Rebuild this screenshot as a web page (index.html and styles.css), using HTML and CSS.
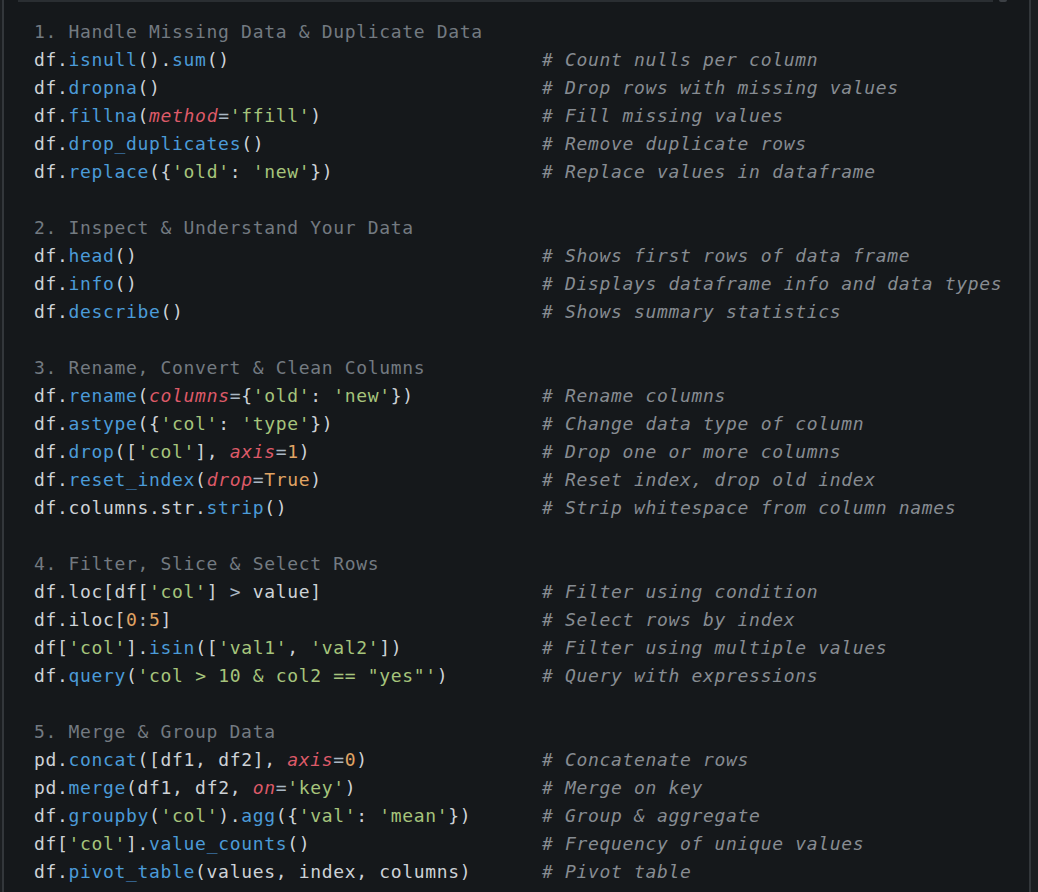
FILE: index.html
```html
<!DOCTYPE html>
<html lang="en">
<head>
<meta charset="utf-8">
<title>Pandas cheat sheet</title>
<link rel="stylesheet" href="styles.css">
</head>
<body>
<div class="window">
  <div class="topbar"><span class="topbar-line"></span><span class="topbar-knob"></span></div>
  <div class="code-block">
    <section class="group">
      <div class="row head">1. Handle Missing Data &amp; Duplicate Data</div>
      <div class="row"><span class="code">df.<span class="fn">isnull</span>().<span class="fn">sum</span>()</span><span class="cmt"># Count nulls per column</span></div>
      <div class="row"><span class="code">df.<span class="fn">dropna</span>()</span><span class="cmt"># Drop rows with missing values</span></div>
      <div class="row"><span class="code">df.<span class="fn">fillna</span>(<span class="kw">method</span><span class="op">=</span><span class="str">'ffill'</span>)</span><span class="cmt"># Fill missing values</span></div>
      <div class="row"><span class="code">df.<span class="fn">drop_duplicates</span>()</span><span class="cmt"># Remove duplicate rows</span></div>
      <div class="row"><span class="code">df.<span class="fn">replace</span>({<span class="str">'old'</span>: <span class="str">'new'</span>})</span><span class="cmt"># Replace values in dataframe</span></div>
    </section>
    <section class="group">
      <div class="row head">2. Inspect &amp; Understand Your Data</div>
      <div class="row"><span class="code">df.<span class="fn">head</span>()</span><span class="cmt"># Shows first rows of data frame</span></div>
      <div class="row"><span class="code">df.<span class="fn">info</span>()</span><span class="cmt"># Displays dataframe info and data types</span></div>
      <div class="row"><span class="code">df.<span class="fn">describe</span>()</span><span class="cmt"># Shows summary statistics</span></div>
    </section>
    <section class="group">
      <div class="row head">3. Rename, Convert &amp; Clean Columns</div>
      <div class="row"><span class="code">df.<span class="fn">rename</span>(<span class="kw">columns</span><span class="op">=</span>{<span class="str">'old'</span>: <span class="str">'new'</span>})</span><span class="cmt"># Rename columns</span></div>
      <div class="row"><span class="code">df.<span class="fn">astype</span>({<span class="str">'col'</span>: <span class="str">'type'</span>})</span><span class="cmt"># Change data type of column</span></div>
      <div class="row"><span class="code">df.<span class="fn">drop</span>([<span class="str">'col'</span>], <span class="kw">axis</span><span class="op">=</span><span class="num">1</span>)</span><span class="cmt"># Drop one or more columns</span></div>
      <div class="row"><span class="code">df.<span class="fn">reset_index</span>(<span class="kw">drop</span><span class="op">=</span><span class="num">True</span>)</span><span class="cmt"># Reset index, drop old index</span></div>
      <div class="row"><span class="code">df.columns.str.<span class="fn">strip</span>()</span><span class="cmt"># Strip whitespace from column names</span></div>
    </section>
    <section class="group">
      <div class="row head">4. Filter, Slice &amp; Select Rows</div>
      <div class="row"><span class="code">df.loc[df[<span class="str">'col'</span>] <span class="op">&gt;</span> value]</span><span class="cmt"># Filter using condition</span></div>
      <div class="row"><span class="code">df.iloc[<span class="num">0</span><span class="op">:</span><span class="num">5</span>]</span><span class="cmt"># Select rows by index</span></div>
      <div class="row"><span class="code">df[<span class="str">'col'</span>].<span class="fn">isin</span>([<span class="str">'val1'</span>, <span class="str">'val2'</span>])</span><span class="cmt"># Filter using multiple values</span></div>
      <div class="row"><span class="code">df.<span class="fn">query</span>(<span class="str">'col &gt; 10 &amp; col2 == "yes"'</span>)</span><span class="cmt"># Query with expressions</span></div>
    </section>
    <section class="group">
      <div class="row head">5. Merge &amp; Group Data</div>
      <div class="row"><span class="code">pd.<span class="fn">concat</span>([df1, df2], <span class="kw">axis</span><span class="op">=</span><span class="num">0</span>)</span><span class="cmt"># Concatenate rows</span></div>
      <div class="row"><span class="code">pd.<span class="fn">merge</span>(df1, df2, <span class="kw">on</span><span class="op">=</span><span class="str">'key'</span>)</span><span class="cmt"># Merge on key</span></div>
      <div class="row"><span class="code">df.<span class="fn">groupby</span>(<span class="str">'col'</span>).<span class="fn">agg</span>({<span class="str">'val'</span>: <span class="str">'mean'</span>})</span><span class="cmt"># Group &amp; aggregate</span></div>
      <div class="row"><span class="code">df[<span class="str">'col'</span>].<span class="fn">value_counts</span>()</span><span class="cmt"># Frequency of unique values</span></div>
      <div class="row"><span class="code">df.<span class="fn">pivot_table</span>(values, index, columns)</span><span class="cmt"># Pivot table</span></div>
    </section>
  </div>
</div>
</body>
</html>
```

FILE: styles.css
```css
html, body {
  margin: 0;
  padding: 0;
  background: #1b1e21;
}

body {
  width: 1038px;
  height: 892px;
  overflow: hidden;
}

.window {
  margin-left: 2px;
  width: 1029px;
  height: 892px;
  background: #15181b;
  border-left: 2px solid #33373b;
  border-right: 2px solid #33373b;
  box-sizing: border-box;
  display: flex;
  flex-direction: column;
}

.topbar {
  height: 2px;
  display: flex;
  align-items: center;
  padding-left: 14px;
  padding-right: 22px;
  gap: 6px;
}

.topbar-line {
  flex: 1;
  height: 2px;
  background: #2a2e32;
}

.topbar-knob {
  width: 8px;
  height: 2px;
  background: #3c4045;
  border-radius: 0 0 4px 4px;
}

.code-block {
  padding: 16px 0 0 30px;
  font-family: "DejaVu Sans Mono", "Liberation Mono", monospace;
  font-size: 18px;
  letter-spacing: 0.67px;
  line-height: 28px;
  color: #cdd2d7;
}

.group {
  margin-bottom: 28px;
}

.group:last-child {
  margin-bottom: 0;
}

.row {
  display: flex;
  height: 28px;
  white-space: pre;
}

.head {
  color: #737a81;
}

.code {
  width: 508px;
  flex: none;
}

.cmt {
  color: #878c92;
  font-style: italic;
}

.fn {
  color: #4b9bd8;
}

.str {
  color: #a6c47c;
}

.kw {
  color: #dd5a68;
  font-style: italic;
}

.num {
  color: #e0a464;
}

.op {
  color: #a9b7c4;
}
```
